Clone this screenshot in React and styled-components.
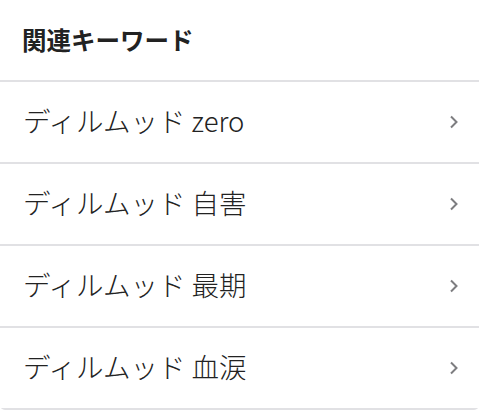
import React from 'react';
import styled, { createGlobalStyle } from 'styled-components';

const keywords = ['ディルムッド zero', 'ディルムッド 自害', 'ディルムッド 最期', 'ディルムッド 血涙'];

export default function App() {
  return (
    <>
      <Global />
      <Card>
        <Header>関連キーワード</Header>
        {keywords.map((k) => (
          <Row key={k}>
            <Label>{k}</Label>
            <Chevron viewBox="0 0 10 14">
              <path d="M2 1.5 L7.5 7 L2 12.5" fill="none" stroke="#7d7d80" strokeWidth="2" />
            </Chevron>
          </Row>
        ))}
      </Card>
    </>
  );
}

const Global = createGlobalStyle`
  body {
    margin: 0;
    background: #fff;
    font-family: "Noto Sans CJK JP", "Noto Sans", sans-serif;
  }
`;
const Card = styled.div`
  width: 479px;
  background: #fff;
  border-radius: 0 0 5px 5px;
  overflow: hidden;
`;
const Header = styled.div`
  height: 82px;
  box-sizing: border-box;
  display: flex;
  align-items: center;
  padding: 0 0 2px 22px;
  font-size: 24.5px;
  font-weight: 700;
  color: #222;
  border-bottom: 2px solid #e1e1e4;
`;
const Row = styled.div`
  height: 82px;
  box-sizing: border-box;
  display: flex;
  align-items: center;
  justify-content: space-between;
  padding: 0 20px 4px 23px;
  border-bottom: 2px solid #e1e1e4;
`;
const Label = styled.span`
  font-size: 27.5px;
  font-weight: 300;
  color: #222;
`;
const Chevron = styled.svg`
  width: 10px;
  height: 14px;
  margin-top: 4px;
`;
